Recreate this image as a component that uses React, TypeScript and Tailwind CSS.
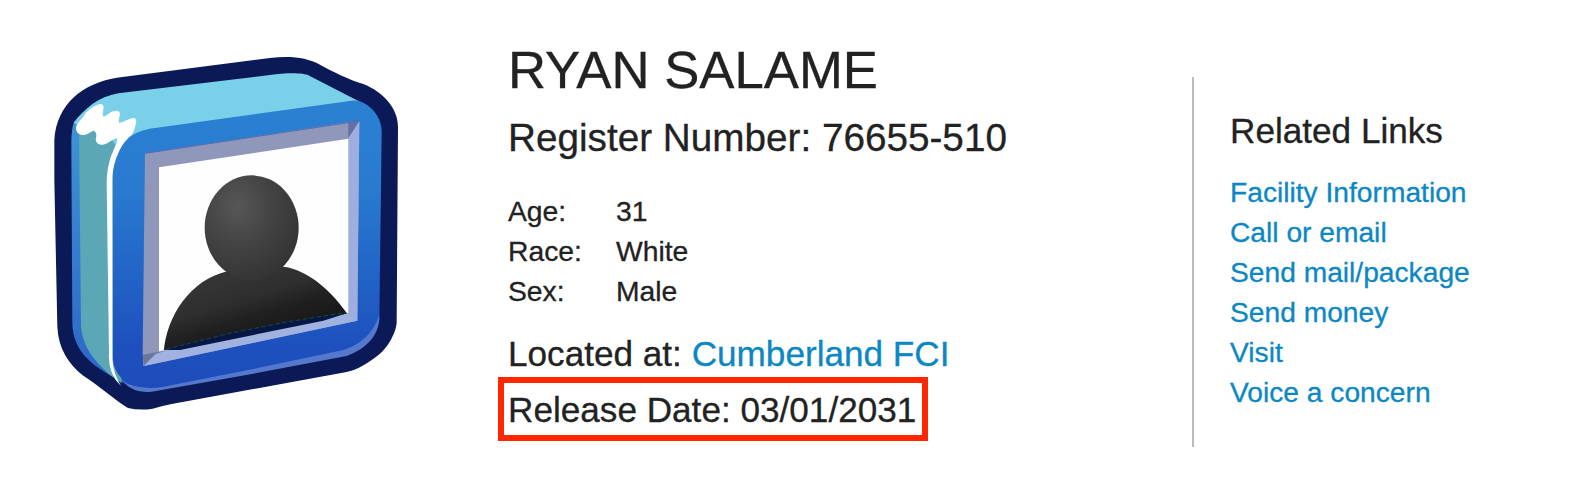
type Detail = {
  label: string;
  value: string;
};

const details: Detail[] = [
  { label: "Age:", value: "31" },
  { label: "Race:", value: "White" },
  { label: "Sex:", value: "Male" },
];

const relatedLinks = [
  "Facility Information",
  "Call or email",
  "Send mail/package",
  "Send money",
  "Visit",
  "Voice a concern",
];

function ProfileIcon() {
  return (
    <svg viewBox="0 0 1140 1170" className="h-[390px] w-[380px]" aria-hidden="true">
      <defs>
        <linearGradient id="front" x1="0" y1="0" x2="0" y2="1">
          <stop offset="0" stopColor="#2b80d2" />
          <stop offset="0.3" stopColor="#297bd0" />
          <stop offset="0.65" stopColor="#2160c5" />
          <stop offset="0.85" stopColor="#1e50bd" />
          <stop offset="1" stopColor="#1c4cba" />
        </linearGradient>
        <linearGradient id="edge" x1="0" y1="0" x2="0" y2="1">
          <stop offset="0" stopColor="#3d94d4" />
          <stop offset="1" stopColor="#2c63c8" />
        </linearGradient>
        <radialGradient id="head" cx="0.35" cy="0.3" r="0.75">
          <stop offset="0" stopColor="#575757" />
          <stop offset="0.5" stopColor="#434343" />
          <stop offset="1" stopColor="#333333" />
        </radialGradient>
        <linearGradient id="body" gradientUnits="userSpaceOnUse" x1="600" y1="710" x2="655" y2="890">
          <stop offset="0" stopColor="#343434" />
          <stop offset="0.35" stopColor="#2e2e2e" />
          <stop offset="0.7" stopColor="#1f1f1f" />
          <stop offset="1" stopColor="#191919" />
        </linearGradient>
        <clipPath id="photo">
          <path d="M357 382 L925 296 L925 820 L357 934 Z" />
        </clipPath>
      </defs>

      {/* outer shell */}
      <path
        d="M230 113 L690 54 C750 47 800 52 840 74 C880 96 925 118 970 132 C1030 156 1074 205 1074 260 L1070 850 C1066 885 1040 925 1018 943 C985 970 950 991 920 996 L395 1092 Q365 1098 338 1106 Q300 1112 264 1104 C220 1077 175 1035 130 1007 C85 972 55 925 52 860 L43 420 L43 300 C50 190 130 130 230 113 Z"
        fill="#0b1a56"
      />
      {/* left edge */}
      <path
        d="M104 242 Q94 262 94 310 L97 850 C99 930 150 970 205 1003 L290 1050 L230 400 L130 250 Z"
        fill="url(#edge)"
      />
      {/* side */}
      <path d="M117 270 L123 860 C130 925 165 965 214 1008 L245 1030 L235 345 L260 280 L180 240 Z" fill="#5ba7b6" />
      {/* top */}
      <path
        d="M101 248 C135 205 175 170 235 160 L690 105 C740 98 790 98 808 107 L955 183 L960 200 L330 290 L235 325 L200 280 L130 265 Z"
        fill="#7ad0e8"
      />
      {/* front face */}
      <path
        d="M345 264 L935 182 Q955 180 970 188 C1005 206 1025 240 1025 275 L1018 840 C1008 900 965 928 920 943 L335 1052 C280 1056 223 1012 219 960 L219 390 C224 310 275 272 345 264 Z"
        fill="url(#front)"
      />
      <path
        d="M1018 825 C1000 880 960 915 910 930 L640 987 L370 1040 Q310 1052 250 1027 Q285 1062 335 1055 L640 1001 L920 948 C980 925 1020 885 1018 825 Z"
        fill="#5478cb"
      />
      <path
        d="M217 420 L217 955 Q219 1000 243 1038 Q203 1000 207 940 L200 430 Q200 355 238 300 L265 285 Q217 355 217 420 Z"
        fill="#ffffff"
      />
      {/* highlight */}
      <path
        d="M108 264 C109 250 121 242 130 230 Q142 206 178 192 Q191 190 191 204 Q186 222 190 230 C204 226 209 214 227 212 Q240 211 240 224 Q234 242 238 249 C252 246 260 238 280 234 Q291 234 288 249 C284 268 281 278 272 287 C252 305 240 325 230 348 L224 322 Q232 308 232 294 C214 298 206 312 188 314 C170 316 164 302 169 289 Q170 278 162 272 C150 274 144 285 126 285 Q109 283 108 264 Z"
        fill="#ffffff"
      />

      {/* inset frame */}
      <path d="M315 340 L925 246 L958 243 L952 842 L310 978 L308 940 Z" fill="#8f97bb" />
      <path d="M958 243 L925 294 L925 820 L952 842 Z" fill="#9daedf" />
      <path d="M952 842 L925 820 L357 934 L312 978 Z" fill="#a0b2df" />
      <path d="M925 246 L958 243 L925 294 Z" fill="#6370aa" />
      <path d="M308 944 L376 932 L344 943 L312 976 Z" fill="#6b7599" />
      <path d="M315 340 L958 243" fill="none" stroke="#556cad" strokeWidth="3" />
      <path d="M357 382 L925 296 L925 820 L357 934 Z" fill="#fefefe" />

      <g clipPath="url(#photo)">
        <path
          d="M371 940 C378 830 450 720 562 694 L600 680 L700 680 L731 680 C810 690 885 765 925 826 L925 940 Z"
          fill="url(#body)"
        />
        <ellipse cx="635" cy="563" rx="141" ry="157" fill="url(#head)" />
      </g>
      <path d="M371 930 L560 882 L740 846 L925 818 L850 842 L420 930 Z" fill="#061744" />
      <path d="M378 928 L560 882 L740 846 L915 818" fill="none" stroke="#174552" strokeWidth="3" strokeDasharray="14 7" />
    </svg>
  );
}

export default function App() {
  return (
    <main className="flex h-[492px] w-[1592px] bg-white font-['Liberation_Sans',Arial,sans-serif] text-[#222222] [-webkit-text-stroke:0.3px]">
      <div className="w-[508px] shrink-0 pt-10 pl-10">
        <ProfileIcon />
      </div>

      <section className="w-[684px] shrink-0 pt-10">
        <h1 className="text-[52.7px] leading-[60px]">RYAN SALAME</h1>
        <h2 className="mt-[13px] text-[38.7px] leading-[50px]">Register Number: 76655-510</h2>

        <dl className="mt-7 text-[28.3px] leading-10">
          {details.map((item) => (
            <div key={item.label} className="flex">
              <dt className="w-[108px]">{item.label}</dt>
              <dd>{item.value}</dd>
            </div>
          ))}
        </dl>

        <p className="mt-5 text-[35.15px] leading-[46px]">
          Located at:{" "}
          <a href="#" className="text-[#0b87c4]">
            Cumberland FCI
          </a>
        </p>
        <p className="-ml-2.5 h-16 w-[430px] border-6 border-[#ff2600] pt-px pl-1 text-[35.15px] leading-[52px] whitespace-nowrap">
          Release Date: 03/01/2031
        </p>
      </section>

      <aside className="mt-[77px] h-[370px] border-l-2 border-[#bbbbbb] pt-[31px] pl-9">
        <h3 className="text-[35.15px] leading-[46px]">Related Links</h3>
        <ul className="mt-[18px] text-[28.2px] leading-10">
          {relatedLinks.map((link) => (
            <li key={link}>
              <a href="#" className="text-[#0b87c4]">
                {link}
              </a>
            </li>
          ))}
        </ul>
      </aside>
    </main>
  );
}
